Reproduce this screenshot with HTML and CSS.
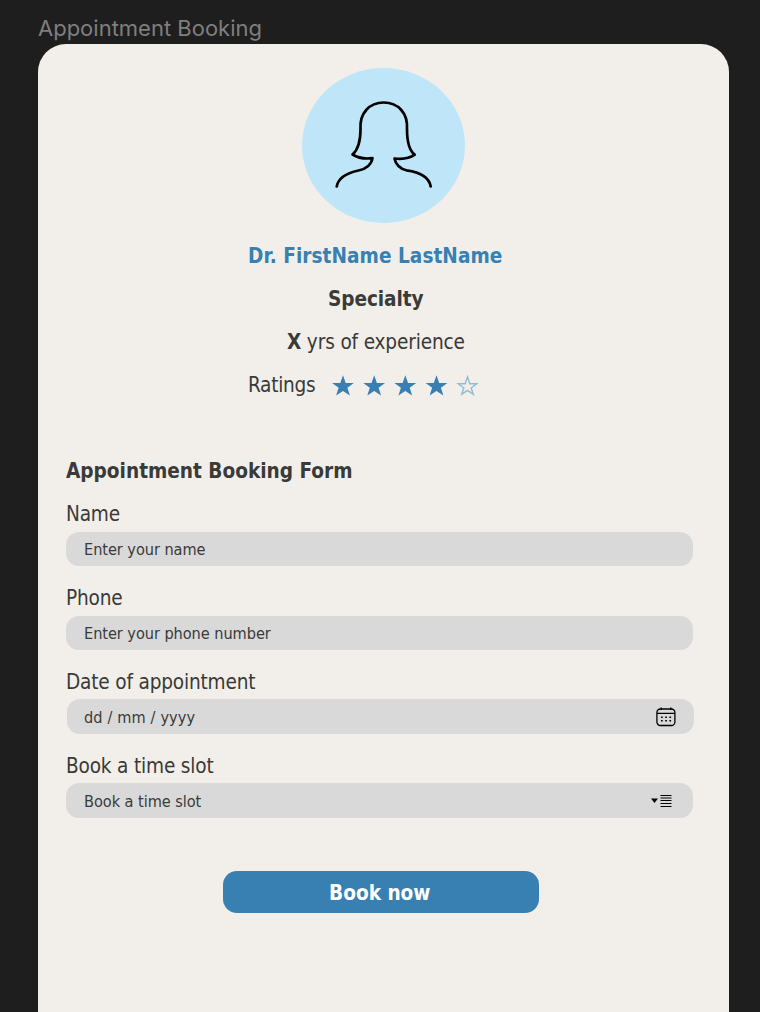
FILE: index.html
```html
<!DOCTYPE html>
<html lang="en">
<head>
<meta charset="utf-8">
<title>Appointment Booking</title>
<link rel="stylesheet" href="styles.css">
</head>
<body>
<div class="frame-title"><span class="t">Appointment Booking</span></div>
<main class="card">
  <svg class="avatar" viewBox="0 0 163 155">
    <ellipse cx="81.5" cy="77.5" rx="81.5" ry="77.5" fill="#bfe5f8"/>
    <g fill="none" stroke="#000" stroke-width="2.7" stroke-linecap="round" stroke-linejoin="round">
      <path d="M34.7 118.500C36.500 108.500 47 104.500 56.500 102.500C64.500 101 69.500 96 70.500 90C62 91.500 55.500 89.500 50.500 86.500C57 81 58.500 71 58.500 61C57.500 45 67.500 34.500 81.700 34.500C96 34.500 106 45 105 61C105 71 106.500 82 112.700 86.700C108 90 101 91.500 92.500 90.500C93.500 96 98 101 104.500 102.300C117 104 127 108 128.700 118.500"/>
    </g>
  </svg>
  <section class="doctor">
    <h1 class="row name"><span class="t">Dr. FirstName LastName</span></h1>
    <h2 class="row specialty"><span class="t">Specialty</span></h2>
    <p class="row experience"><span class="t"><b>X</b> yrs of experience</span></p>
    <div class="row ratings"><span class="t ratings-text">Ratings</span>
      <svg class="stars" viewBox="0 0 148 22">
        <defs><path id="star" d="M11 0.300L13.700 8H21.900L15.400 12.700L17.900 20.500L11 15.900L4.100 20.500L6.600 12.700L0.100 8H8.300Z"/></defs>
        <g fill="#3880b1"><use href="#star"/><use href="#star" x="31.200"/><use href="#star" x="62.300"/><use href="#star" x="93.500"/></g>
        <path d="M135.500 1.700L137.800 8.700H144.800L139.200 12.900L141.300 19.300L135.500 15.300L129.700 19.300L131.800 12.900L126.200 8.700H133.200Z" fill="none" stroke="#8dbdd6" stroke-width="1.400"/>
      </svg>
    </div>
  </section>
  <form class="form">
    <h2 class="row heading"><span class="t">Appointment Booking Form</span></h2>
    <div class="field"><div class="label"><span class="t">Name</span></div><div class="input"><span class="t">Enter your name</span></div></div>
    <div class="field"><div class="label"><span class="t">Phone</span></div><div class="input"><span class="t">Enter your phone number</span></div></div>
    <div class="field"><div class="label"><span class="t">Date of appointment</span></div><div class="input date"><span class="t">dd / mm / yyyy</span>
      <svg class="calendar" viewBox="0 0 20 20"><g fill="none" stroke="#000" stroke-width="1.300"><rect x="0.900" y="2" width="18" height="16.500" rx="3.500"/><path d="M1 6.400H19M5.200 0.500V3M14.800 0.500V3"/></g><path d="M5 9.500h1.700v1.500h-1.700zM9.200 9.500h1.700v1.500h-1.700zM13.400 9.500h1.700v1.500h-1.700zM5 13h1.700v1.500h-1.700zM9.200 13h1.700v1.500h-1.700zM13.400 13h1.700v1.500h-1.700z"/></svg>
    </div></div>
    <div class="field"><div class="label"><span class="t">Book a time slot</span></div><div class="input"><span class="t">Book a time slot</span>
      <svg class="menu" viewBox="0 0 21 14"><path d="M0 4.500H7L3.500 9Z"/><path d="M9.500 1.500H20.500M9.500 4H20.500M9.500 6.500H20.500M9.500 9.500H20.500M9.500 12.500H20.500" stroke="#000" stroke-width="1.100"/></svg>
    </div></div>
    <button class="book" type="button"><span class="t">Book now</span></button>
  </form>
</main>
</body>
</html>
```
FILE: styles.css
```css
* { box-sizing: border-box; }
body { margin: 0; height: 1012px; overflow: hidden; background: #1e1e1e; color: #3a3a38; font: 20.6px/1 "DejaVu Sans Condensed", "DejaVu Sans", sans-serif; font-stretch: condensed; display: flex; flex-direction: column; }
h1, h2, p { margin: 0; font-size: inherit; }
.t { white-space: pre; }
.frame-title { height: 44px; flex: none; padding: 16px 0 0 38px; color: #7f7f7f; font: 22px/24px Inter, sans-serif; }
.card { width: 691.500px; height: 968px; flex: none; margin-left: 37.500px; padding: 24.300px 28px 0 28.500px; border-radius: 28px 28px 0 0; background: #f2efea; display: flex; flex-direction: column; }
.avatar { width: 163px; height: 155px; flex: none; margin-left: 236px; }
.row { height: 43.250px; display: flex; align-items: center; }
.doctor { padding: 11px 0 0 182px; flex: none; }
.name { color: #3880b1; letter-spacing: 0.040px; }
.specialty { padding-left: 80px; letter-spacing: -0.100px; }
.experience { padding-left: 39px; letter-spacing: -0.150px; }
.ratings-text { width: 83.500px; letter-spacing: -0.300px; }
.stars { width: 148px; height: 22px; }
.form { margin-top: 43px; }
.heading { height: 42.400px; }
.field { height: 83.900px; }
.label { height: 39px; padding-top: 4px; display: flex; align-items: center; letter-spacing: -0.180px; }
.input { width: 627px; height: 34.500px; padding: 0 18px; border-radius: 13px; background: #d9d9d9; font-size: 16.200px; letter-spacing: -0.060px; display: flex; align-items: center; justify-content: space-between; }
.input .t { padding-top: 2px; }
.date { margin-left: 1px; padding-left: 17px; letter-spacing: 0.120px; }
.calendar { width: 20px; height: 20px; }
.menu { width: 21px; height: 14px; margin-right: 3px; }
.book { display: flex; align-items: center; justify-content: center; width: 316.500px; height: 42.500px; margin: 42.500px 0 0 156.500px; padding: 2px 2px 0 0; border: 0; border-radius: 14px; background: #3880b1; color: #fff; font: bold 20.6px/1 "DejaVu Sans Condensed", "DejaVu Sans", sans-serif; font-stretch: condensed; }
```
